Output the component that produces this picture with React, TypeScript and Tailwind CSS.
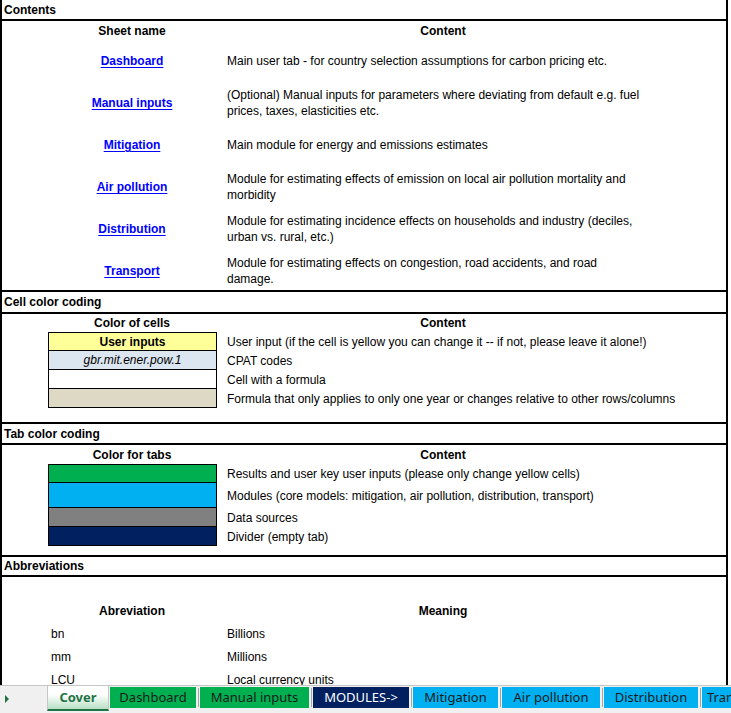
import React from "react";

const rows: { name: string; lines: string[] }[] = [
  { name: "Dashboard", lines: ["Main user tab - for country selection assumptions for carbon pricing etc."] },
  { name: "Manual inputs", lines: ["(Optional) Manual inputs for parameters where deviating from default e.g. fuel", "prices, taxes, elasticities etc."] },
  { name: "Mitigation", lines: ["Main module for energy and emissions estimates"] },
  { name: "Air pollution", lines: ["Module for estimating effects of emission on local air pollution mortality and", "morbidity"] },
  { name: "Distribution", lines: ["Module for estimating incidence effects on households and industry (deciles,", "urban vs. rural, etc.)"] },
  { name: "Transport", lines: ["Module for estimating effects on congestion, road accidents, and road", "damage."] },
];

function SectionHeader({ title, h }: { title: string; h: string }) {
  return (
    <div className={`${h} flex items-center pl-[2px] font-bold border-b-2 border-black`}>{title}</div>
  );
}

function Sep() {
  return (
    <div className="w-[4px] h-[21px] shrink-0 flex justify-center items-center">
      <div className="w-px h-[19px] bg-[#a6a6a6]" />
    </div>
  );
}

function Tab({ label, w, bg, fg }: { label: string; w: string; bg: string; fg: string }) {
  return (
    <div className={`${w} ${bg} ${fg} h-[21px] shrink-0 flex items-center justify-center whitespace-nowrap overflow-hidden`}>
      {label}
    </div>
  );
}

export default function App() {
  return (
    <div className="w-[731px] h-[713px] overflow-hidden bg-white flex flex-col font-['Liberation_Sans',Arial,sans-serif] text-[12px] leading-none text-black">
      <div className="h-[685px] overflow-hidden shrink-0">
        <div className="w-[728px] border-x-2 border-black">
          <SectionHeader title="Contents" h="h-[21px]" />
          <div className="h-[271px] border-b-2 border-black">
            <div className="h-[19px] flex items-center font-bold">
              <div className="ml-[46px] w-[168px] text-center">Sheet name</div>
              <div className="ml-[11px] w-[432px] text-center">Content</div>
            </div>
            {rows.map((r, i) => (
              <div key={r.name} className={`${i === 5 ? "h-[41px]" : "h-[42px]"} flex items-center`}>
                <div className="ml-[46px] w-[168px] text-center">
                  <span className="font-bold text-[#0000ff] underline underline-offset-2">{r.name}</span>
                </div>
                <div className="ml-[11px] w-[440px] leading-[16px]">
                  {r.lines.map((l) => (
                    <div key={l} className="whitespace-nowrap">{l}</div>
                  ))}
                </div>
              </div>
            ))}
          </div>

          <SectionHeader title="Cell color coding" h="h-[22px]" />
          <div className="h-[110px] border-b-2 border-black">
            <div className="h-[18px] flex items-center font-bold">
              <div className="ml-[46px] w-[168px] text-center">Color of cells</div>
              <div className="ml-[11px] w-[432px] text-center">Content</div>
            </div>
            <div className="flex">
              <div className="ml-[46px] w-[169px] border border-black">
                <div className="h-[18px] bg-[#ffff99] border-b border-black flex items-center justify-center font-bold">User inputs</div>
                <div className="h-[19px] bg-[#dce6f1] border-b border-black flex items-center justify-center italic">gbr.mit.ener.pow.1</div>
                <div className="h-[19px] bg-white border-b border-black" />
                <div className="h-[18px] bg-[#ddd9c4]" />
              </div>
              <div className="ml-[10px] flex flex-col">
                <div className="h-[19px] flex items-center">User input (if the cell is yellow you can change it -- if not, please leave it alone!)</div>
                <div className="h-[19px] flex items-center">CPAT codes</div>
                <div className="h-[19px] flex items-center">Cell with a formula</div>
                <div className="h-[19px] flex items-center">Formula that only applies to only one year or changes relative to other rows/columns</div>
              </div>
            </div>
          </div>

          <SectionHeader title="Tab color coding" h="h-[21px]" />
          <div className="h-[112px] border-b-2 border-black">
            <div className="h-[19px] flex items-center font-bold">
              <div className="ml-[46px] w-[168px] text-center">Color for tabs</div>
              <div className="ml-[11px] w-[432px] text-center">Content</div>
            </div>
            <div className="flex">
              <div className="ml-[46px] w-[169px] border border-black">
                <div className="h-[18px] bg-[#00b050] border-b border-black" />
                <div className="h-[25px] bg-[#00b0f0] border-b border-black" />
                <div className="h-[19px] bg-[#808080] border-b border-black" />
                <div className="h-[18px] bg-[#002060]" />
              </div>
              <div className="ml-[10px] flex flex-col">
                <div className="h-[19px] flex items-center">Results and user key user inputs (please only change yellow cells)</div>
                <div className="h-[25px] flex items-center">Modules (core models: mitigation, air pollution, distribution, transport)</div>
                <div className="h-[19px] flex items-center">Data sources</div>
                <div className="h-[19px] flex items-center">Divider (empty tab)</div>
              </div>
            </div>
          </div>

          <SectionHeader title="Abbreviations" h="h-[20px]" />
          <div className="h-[120px]">
            <div className="h-[22px]" />
            <div className="h-[23px] flex items-center font-bold">
              <div className="ml-[46px] w-[168px] text-center">Abreviation</div>
              <div className="ml-[11px] w-[432px] text-center">Meaning</div>
            </div>
            {[
              ["bn", "Billions"],
              ["mm", "Millions"],
              ["LCU", "Local currency units"],
            ].map(([a, m]) => (
              <div key={a} className="h-[23px] flex items-center">
                <div className="ml-[49px] w-[165px]">{a}</div>
                <div className="ml-[11px]">{m}</div>
              </div>
            ))}
          </div>
        </div>
      </div>

      <div className="h-[28px] shrink-0 bg-[#f0f0f0] border-t border-[#c6c6c6] flex items-start overflow-hidden font-['Noto_Sans',sans-serif] text-[13px] leading-none">
        <div className="w-[47px] h-[26px] shrink-0 flex items-center pl-[5px]">
          <div className="w-0 h-0 border-y-[4px] border-y-transparent border-l-[4px] border-l-[#217346]" />
        </div>
        <div className="w-[62px] h-[26px] -mt-px shrink-0 border-x border-[#c6c6c6] border-b-2 border-b-[#217346] bg-gradient-to-b from-white from-40% to-[#b7dfc4] flex items-center justify-center font-bold text-[#217346] text-[13px]">
          Cover
        </div>
        <div className="w-[1px] shrink-0" />
        <div className="flex items-center mt-[1px] shrink-0">
          <Tab label="Dashboard" w="w-[86px]" bg="bg-[#00b050]" fg="text-[#1a1a1a]" />
          <Sep />
          <Tab label="Manual inputs" w="w-[109px]" bg="bg-[#00b050]" fg="text-[#1a1a1a]" />
          <Sep />
          <Tab label="MODULES->" w="w-[96px]" bg="bg-[#002060]" fg="text-white" />
          <Sep />
          <Tab label="Mitigation" w="w-[85px]" bg="bg-[#00b0f0]" fg="text-[#1a1a1a]" />
          <Sep />
          <Tab label="Air pollution" w="w-[98px]" bg="bg-[#00b0f0]" fg="text-[#1a1a1a]" />
          <Sep />
          <Tab label="Distribution" w="w-[94px]" bg="bg-[#00b0f0]" fg="text-[#1a1a1a]" />
          <Sep />
          <div className="w-[80px] h-[21px] shrink-0 bg-[#00b0f0] text-[#1a1a1a] flex items-center pl-[5px] whitespace-nowrap overflow-hidden">Transport</div>
        </div>
      </div>
    </div>
  );
}
